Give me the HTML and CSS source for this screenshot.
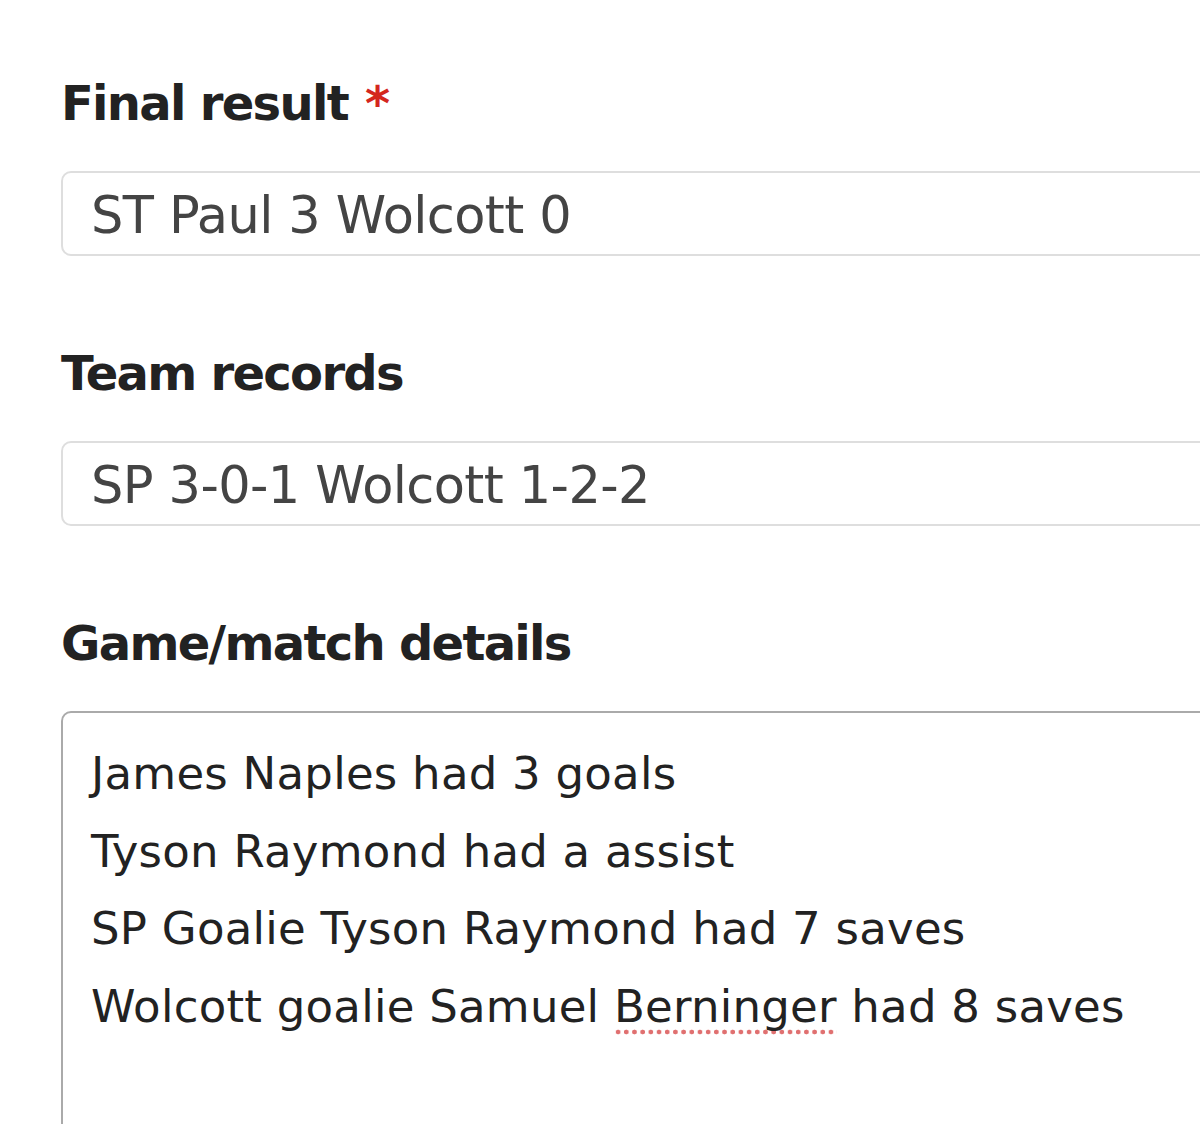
FILE: index.html
```html
<!DOCTYPE html>
<html lang="en">
<head>
    <meta charset="UTF-8">
    <meta name="viewport" content="width=device-width, initial-scale=1.0">
    <title>Game report</title>
    <link rel="stylesheet" href="styles.css">
</head>
<body>
    <form class="report">
        <div class="field">
            <label for="result">Final result <span class="required">*</span></label>
            <input type="text" id="result" value="ST Paul 3 Wolcott 0">
        </div>

        <div class="field">
            <label for="records">Team records</label>
            <input type="text" id="records" value="SP 3-0-1 Wolcott 1-2-2">
        </div>

        <div class="field">
            <label for="details">Game/match details</label>
            <div id="details" class="textarea" role="textbox" aria-multiline="true">
                <div>James Naples had 3 goals</div>
                <div>Tyson Raymond had a assist</div>
                <div>SP Goalie Tyson Raymond had 7 saves</div>
                <div>Wolcott goalie Samuel <span class="misspelled">Berninger</span> had 8 saves</div>
            </div>
        </div>
    </form>
</body>
</html>
```

FILE: styles.css
```css
html, body {
    overflow: hidden;
}

body {
    margin: 0;
    background: #fff;
    font-family: 'DejaVu Sans', Verdana, sans-serif;
    color: #222;
}

.report {
    width: 1300px;
    padding: 75px 0 0 61px;
}

.field {
    margin-bottom: 89px;
}

.field label {
    display: block;
    font-size: 48px;
    line-height: 56px;
    font-weight: bold;
    letter-spacing: -1.7px;
    color: #222;
    margin-bottom: 40px;
}

.required {
    color: #d4261e;
    margin-left: 2px;
    letter-spacing: 0;
}

.field input[type="text"] {
    display: block;
    box-sizing: border-box;
    width: 100%;
    height: 85px;
    padding: 3px 28px 0;
    border: 2px solid #dedede;
    border-radius: 10px;
    font-family: inherit;
    font-size: 51px;
    letter-spacing: -0.6px;
    color: #444;
    background: #fff;
    outline: none;
}

.textarea {
    box-sizing: border-box;
    width: 100%;
    height: 600px;
    padding: 22px 28px;
    border: 2px solid #aaa;
    border-radius: 10px;
    font-size: 45px;
    line-height: 77.5px;
    letter-spacing: 0.25px;
    color: #222;
}

.misspelled {
    background-image: radial-gradient(circle, #e07070 2.1px, transparent 2.7px);
    background-size: 8.2px 6px;
    background-repeat: repeat-x;
    background-position: 0 100%;
    padding-bottom: 2px;
}
```
